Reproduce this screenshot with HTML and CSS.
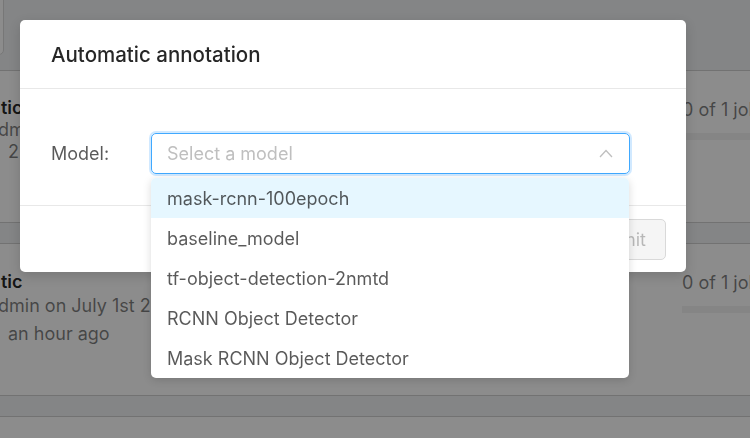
FILE: index.html
```html
<!DOCTYPE html>
<html lang="en">
<head>
<meta charset="utf-8">
<title>Automatic annotation</title>
<link rel="stylesheet" href="styles.css">
</head>
<body>
<div class="page">
  <div class="topbar"><div class="top-btn"></div></div>
  <div class="list">
    <div class="card card-a">
      <div class="info">
        <div class="name">tic_</div>
        <div class="meta cut">dmin on July 1st 2025</div>
        <div class="meta indent">25 minutes ago</div>
      </div>
      <div class="status">
        <div class="count">0 of 1 jobs</div>
        <div class="bar"></div>
      </div>
    </div>
    <div class="card card-b">
      <div class="info">
        <div class="name">tic</div>
        <div class="meta cut">dmin on July 1st 2025</div>
        <div class="meta indent last">an hour ago</div>
      </div>
      <div class="status">
        <div class="count">0 of 1 jobs</div>
        <div class="bar"></div>
      </div>
    </div>
    <div class="card card-c"></div>
  </div>
</div>

<div class="mask"></div>

<div class="modal">
  <div class="modal-header">
    <div class="modal-title">Automatic annotation</div>
  </div>
  <div class="modal-body">
    <div class="form-row">
      <div class="label">Model:</div>
      <div class="select">
        <span class="placeholder">Select a model</span>
        <svg class="chevron" width="14" height="9" viewBox="0 0 14 9"><path d="M1 8 L7 1.5 L13 8" fill="none" stroke="#bfbfbf" stroke-width="1.3"/></svg>
      </div>
    </div>
  </div>
  <div class="modal-footer">
    <button class="btn">Cancel</button>
    <button class="btn btn-disabled" disabled>Submit</button>
  </div>
</div>

<div class="dropdown">
  <div class="option active">mask-rcnn-100epoch</div>
  <div class="option">baseline_model</div>
  <div class="option">tf-object-detection-2nmtd</div>
  <div class="option">RCNN Object Detector</div>
  <div class="option">Mask RCNN Object Detector</div>
</div>
</body>
</html>
```
FILE: styles.css
```css
html, body {
  margin: 0;
  padding: 0;
}
body {
  width: 750px;
  height: 438px;
  overflow: hidden;
  position: relative;
  background: #f0f2f5;
  font-family: Inter, "Noto Sans", "Liberation Sans", sans-serif;
}
.page {
  height: 438px;
  overflow: hidden;
}

.topbar {
  height: 70px;
  display: flow-root;
}
.top-btn {
  width: 64px;
  height: 65px;
  margin: -10px 0 0 -60px;
  box-sizing: border-box;
  background: #fff;
  border: 1px solid #d9d9d9;
  border-radius: 5px;
}

.list {
  display: flex;
  flex-direction: column;
  gap: 20px;
  margin: 0 -1px;
}
.card {
  flex: 0 0 153px;
  height: 153px;
  box-sizing: border-box;
  background: #fff;
  border: 1px solid #cfcfcf;
  display: flex;
  justify-content: space-between;
  white-space: nowrap;
}
.info {
  font-size: 18px;
}
.card-a .info {
  padding-top: 26px;
  line-height: 22px;
}
.card-b .info {
  padding-top: 26px;
  line-height: 24px;
}
.name {
  font-weight: 600;
  color: rgba(0, 0, 0, 0.85);
  padding-left: 1px;
}
.meta {
  color: rgba(0, 0, 0, 0.5);
}
.cut {
  text-indent: -2px;
}
.indent {
  padding-left: 8px;
}
.last {
  margin-top: 4px;
}
.status {
  width: 68px;
  padding-top: 27px;
  font-size: 18px;
  line-height: 24px;
  color: rgba(0, 0, 0, 0.5);
}
.bar {
  margin-top: 11px;
  height: 7px;
  width: 120px;
  background: #f2f2f2;
}

.mask {
  position: fixed;
  inset: 0;
  background: rgba(0, 0, 0, 0.45);
}

.modal {
  position: absolute;
  left: 20px;
  top: 20px;
  width: 666px;
  background: #fff;
  border-radius: 5px;
  box-shadow: 0 4px 12px rgba(0, 0, 0, 0.15);
}
.modal-header {
  height: 68px;
  padding: 0 31px;
  display: flex;
  align-items: center;
  border-bottom: 1px solid #e8e8e8;
}
.modal-title {
  font-size: 20.5px;
  font-weight: 500;
  color: rgba(0, 0, 0, 0.85);
}
.modal-body {
  padding: 44px 31px 31px;
}
.form-row {
  display: flex;
  align-items: center;
}
.label {
  width: 100px;
  font-size: 18px;
  color: rgba(0, 0, 0, 0.65);
}
.select {
  width: 479px;
  height: 41px;
  box-sizing: border-box;
  border: 1px solid #40a9ff;
  border-radius: 5px;
  box-shadow: 0 0 0 2px rgba(24, 144, 255, 0.2);
  display: flex;
  align-items: center;
  justify-content: space-between;
  padding: 0 16px 0 15px;
}
.placeholder {
  font-size: 18px;
  color: #bfbfbf;
}
.chevron {
  display: block;
}
.modal-footer {
  border-top: 1px solid #e8e8e8;
  padding: 13px 20px 12px;
  display: flex;
  justify-content: flex-end;
  gap: 10px;
}
.btn {
  height: 41px;
  padding: 0 19px;
  font-family: inherit;
  font-size: 18px;
  border: 1px solid #d9d9d9;
  border-radius: 5px;
  background: #fff;
  color: rgba(0, 0, 0, 0.65);
}
.btn-disabled {
  background: #f5f5f5;
  color: rgba(0, 0, 0, 0.25);
}

.dropdown {
  position: absolute;
  left: 151px;
  top: 178px;
  width: 478px;
  background: #fff;
  border-radius: 5px;
  box-shadow: 0 2px 8px rgba(0, 0, 0, 0.15);
  overflow: hidden;
}
.option {
  height: 40px;
  padding: 0 16px;
  display: flex;
  align-items: center;
  font-size: 18px;
  color: rgba(0, 0, 0, 0.65);
}
.option.active {
  background: #e6f7ff;
}
```
